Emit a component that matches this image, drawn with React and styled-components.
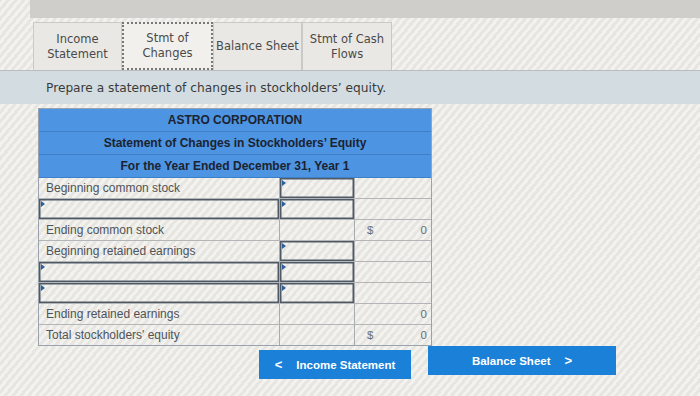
import React from "react";
import styled, { createGlobalStyle } from "styled-components";

const Global = createGlobalStyle`
  html, body {
    margin: 0;
    padding: 0;
  }
  body {
    width: 700px;
    height: 396px;
    overflow: hidden;
    background-color: #ecebe6;
    background-image: repeating-linear-gradient(
      -50deg,
      rgba(255, 255, 255, 0.35) 0px,
      rgba(255, 255, 255, 0.35) 3px,
      rgba(0, 0, 0, 0.025) 3px,
      rgba(0, 0, 0, 0.025) 6px
    );
    font-family: "Liberation Sans", Arial, sans-serif;
  }
`;

const Pagina = styled.div`
  width: 700px;
  height: 396px;
  display: flex;
  flex-direction: column;
`;

const BandaSuperior = styled.div`
  height: 18px;
  margin-left: 30px;
  background: #cfcecb;
`;

const BarraPestanas = styled.div`
  display: flex;
  padding: 4px 0 0 33px;
  height: 48px;
  border-bottom: 1px solid #b9bcbd;
`;

const Pestana = styled.div`
  width: ${(props) => props.ancho}px;
  box-sizing: border-box;
  display: flex;
  align-items: center;
  justify-content: center;
  text-align: center;
  font-family: "DejaVu Sans", Verdana, sans-serif;
  font-size: 11.5px;
  line-height: 15px;
  color: #4a4a4a;
  background: ${(props) => (props.activa ? "#f1f0ec" : "#e9e8e4")};
  border: ${(props) =>
    props.activa ? "2px dotted #777" : "1px solid #c9c9c6"};
  border-bottom: ${(props) => (props.activa ? "2px dotted #777" : "none")};
`;

const Instruccion = styled.div`
  height: 33px;
  display: flex;
  align-items: center;
  padding-left: 46px;
  background: #d3dde1;
  font-family: "DejaVu Sans", Verdana, sans-serif;
  font-size: 12.2px;
  color: #3a3a3a;
`;

const Tabla = styled.div`
  margin: 4px 0 0 38px;
  width: 394px;
  border: 1px solid #9aa3ad;
  box-sizing: border-box;
`;

const Encabezado = styled.div`
  height: 22px;
  display: flex;
  align-items: center;
  justify-content: center;
  background: #4d94e2;
  border-bottom: 1px solid #3f7fc6;
  font-weight: bold;
  font-size: 12px;
  color: #1c2330;
`;

const Fila = styled.div`
  display: grid;
  grid-template-columns: 240px 75px 1fr;
  height: 20px;
  border-top: 1px solid #b3b5b6;
  &:first-of-type {
    border-top: none;
  }
`;

const Celda = styled.div`
  position: relative;
  display: flex;
  align-items: center;
  justify-content: space-between;
  padding: ${(props) => (props.cifras ? "0 4px 0 12px" : "0 6px 0 7px")};
  font-size: 12px;
  color: #505358;
  border-left: ${(props) => (props.primera ? "none" : "1px solid #a9acae")};
  box-shadow: ${(props) =>
    props.entrada ? "inset 0 0 0 1.5px #4f5a66" : "none"};
`;

const Marca = styled.span`
  position: absolute;
  left: 2px;
  top: 2px;
  width: 0;
  height: 0;
  border-top: 3px solid transparent;
  border-bottom: 3px solid transparent;
  border-left: 4px solid #2c5f9a;
`;

const Cifra = styled.span`
  color: #6b6e72;
  font-size: 11.5px;
`;

const PiePagina = styled.div`
  display: flex;
  align-items: flex-start;
  gap: 17px;
  margin: 0 0 0 259px;
`;

const Boton = styled.button`
  height: 29px;
  width: ${(props) => props.ancho}px;
  margin-top: ${(props) => props.desfase || 0}px;
  border: none;
  background: #1b80d8;
  color: #ffffff;
  font-family: "Liberation Sans", Arial, sans-serif;
  font-weight: bold;
  font-size: 11.5px;
  display: flex;
  align-items: center;
  justify-content: center;
  gap: 14px;
  padding: 0;
`;

const Flecha = styled.span`
  font-size: 13px;
  font-weight: bold;
`;

const filas = [
  { etiqueta: "Beginning common stock", c2: true },
  { entrada: true, c2: true },
  { etiqueta: "Ending common stock", signo: "$", valor: "0" },
  { etiqueta: "Beginning retained earnings", c2: true },
  { entrada: true, c2: true },
  { entrada: true, c2: true },
  { etiqueta: "Ending retained earnings", valor: "0" },
  { etiqueta: "Total stockholders' equity", signo: "$", valor: "0" },
];

export default function App() {
  return (
    <Pagina>
      <Global />
      <BandaSuperior />
      <BarraPestanas>
        <Pestana ancho={89}>Income<br />Statement</Pestana>
        <Pestana ancho={91} activa>Stmt of<br />Changes</Pestana>
        <Pestana ancho={89}>Balance Sheet</Pestana>
        <Pestana ancho={90}>Stmt of Cash<br />Flows</Pestana>
      </BarraPestanas>
      <Instruccion>Prepare a statement of changes in stockholders’ equity.</Instruccion>
      <Tabla>
        <Encabezado>ASTRO CORPORATION</Encabezado>
        <Encabezado>Statement of Changes in Stockholders’ Equity</Encabezado>
        <Encabezado>For the Year Ended December 31, Year 1</Encabezado>
        <div>
          {filas.map((f, i) => (
            <Fila key={i}>
              <Celda primera entrada={f.entrada}>
                {f.entrada && <Marca />}
                {f.etiqueta}
              </Celda>
              <Celda entrada={f.c2}>{f.c2 && <Marca />}</Celda>
              <Celda cifras>
                <Cifra>{f.signo}</Cifra>
                <Cifra>{f.valor}</Cifra>
              </Celda>
            </Fila>
          ))}
        </div>
      </Tabla>
      <PiePagina>
        <Boton ancho={152} desfase={4}>
          <Flecha>&lt;</Flecha>
          <span>Income Statement</span>
        </Boton>
        <Boton ancho={188}>
          <span>Balance Sheet</span>
          <Flecha>&gt;</Flecha>
        </Boton>
      </PiePagina>
    </Pagina>
  );
}
